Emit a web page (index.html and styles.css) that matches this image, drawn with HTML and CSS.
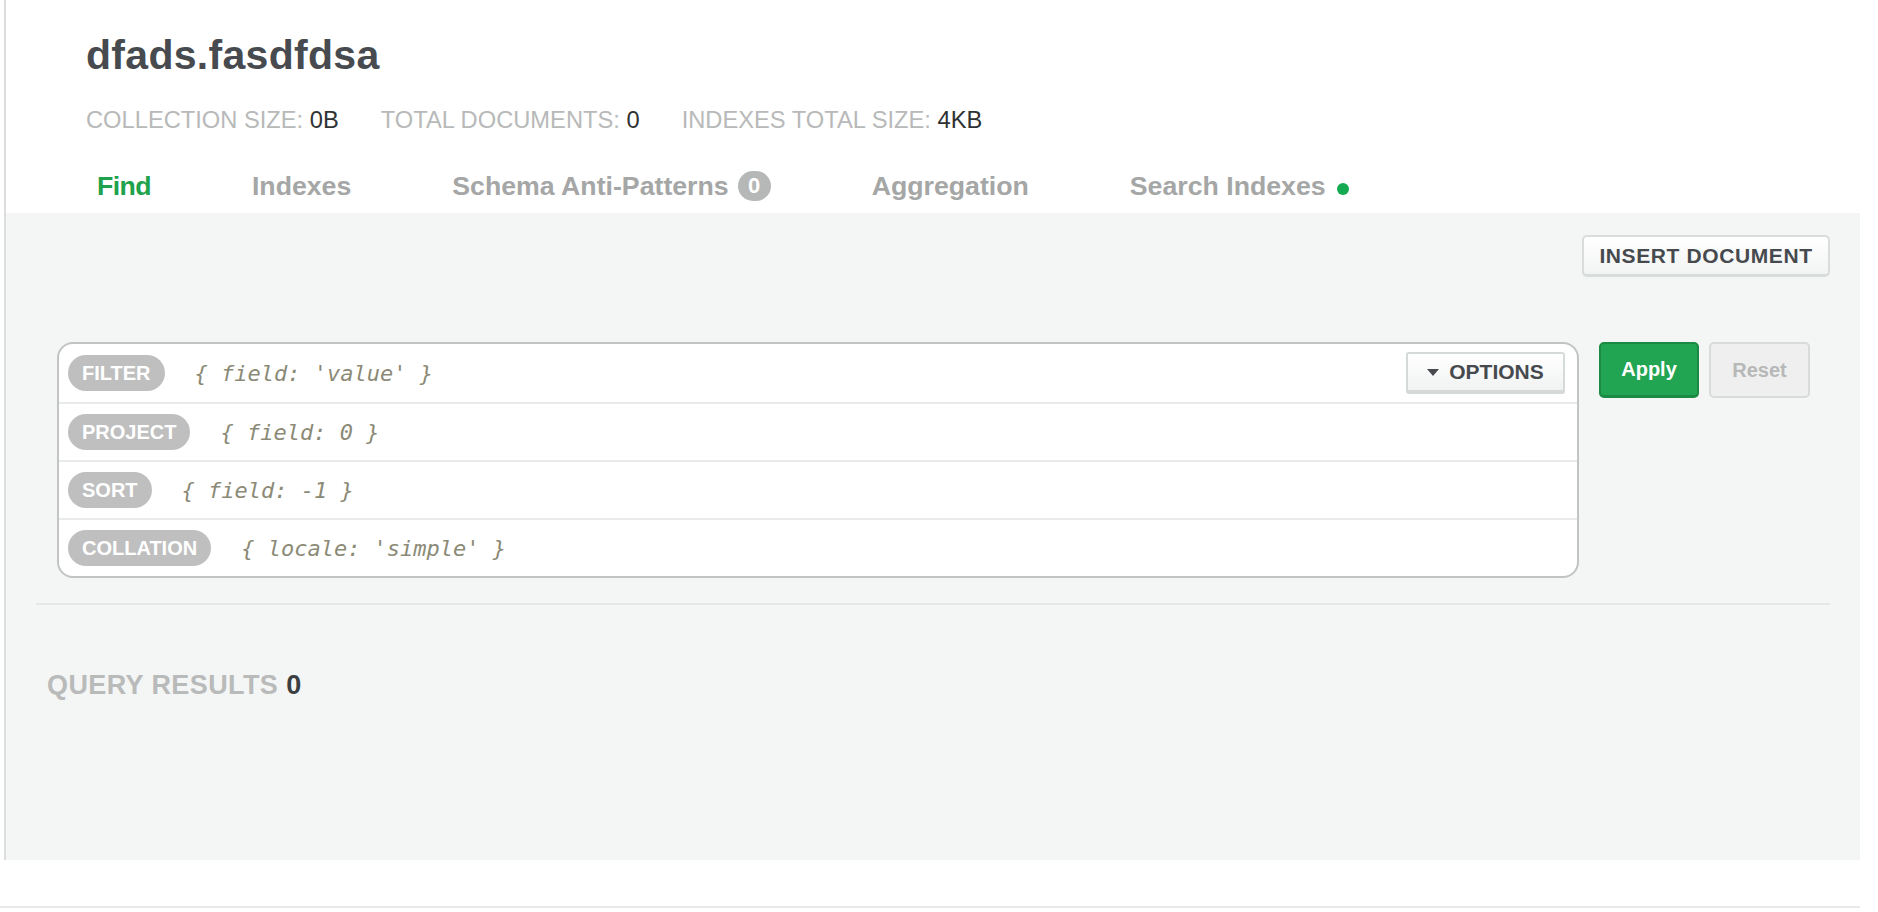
FILE: index.html
```html
<!DOCTYPE html>
<html lang="en">
<head>
<meta charset="utf-8">
<title>dfads.fasdfdsa</title>
<link rel="stylesheet" href="styles.css">
</head>
<body>
<div class="frame">
  <header class="header">
    <h1 class="title">dfads.fasdfdsa</h1>
    <div class="stats">
      <span class="stat"><span class="stat-label">COLLECTION SIZE:</span> <span class="stat-value">0B</span></span>
      <span class="stat"><span class="stat-label">TOTAL DOCUMENTS:</span> <span class="stat-value">0</span></span>
      <span class="stat"><span class="stat-label">INDEXES TOTAL SIZE:</span> <span class="stat-value">4KB</span></span>
    </div>
    <nav class="tabs">
      <span class="tab tab-active">Find</span>
      <span class="tab">Indexes</span>
      <span class="tab">Schema Anti-Patterns <span class="badge">0</span></span>
      <span class="tab">Aggregation</span>
      <span class="tab">Search Indexes <span class="dot"></span></span>
    </nav>
  </header>
  <main class="main">
    <div class="toolbar">
      <button class="btn btn-insert">INSERT DOCUMENT</button>
    </div>
    <section class="query-section">
      <div class="query-bar">
        <div class="query-row">
          <span class="pill">FILTER</span>
          <span class="code">{ field: 'value' }</span>
          <button class="btn btn-options"><span class="caret"></span>OPTIONS</button>
        </div>
        <div class="query-row">
          <span class="pill">PROJECT</span>
          <span class="code">{ field: 0 }</span>
        </div>
        <div class="query-row">
          <span class="pill">SORT</span>
          <span class="code">{ field: -1 }</span>
        </div>
        <div class="query-row">
          <span class="pill">COLLATION</span>
          <span class="code">{ locale: 'simple' }</span>
        </div>
      </div>
      <button class="btn btn-apply">Apply</button>
      <button class="btn btn-reset">Reset</button>
    </section>
    <div class="results">QUERY RESULTS <span class="results-count">0</span></div>
  </main>
</div>
<div class="footer"></div>
</body>
</html>
```

FILE: styles.css
```css
* {
  box-sizing: border-box;
}

html, body {
  margin: 0;
  padding: 0;
  background: #ffffff;
}

body {
  font-family: "Liberation Sans", Arial, sans-serif;
  color: #494c4f;
  width: 1878px;
  height: 912px;
  overflow: hidden;
}

.frame {
  margin-left: 4px;
  width: 1856px;
  height: 860px;
  border-left: 2px solid #dcdddd;
  display: flex;
  flex-direction: column;
}

.header {
  padding: 31px 0 12px 80px;
  background: #ffffff;
}

.title {
  margin: 0;
  font-size: 41px;
  line-height: 48px;
  font-weight: bold;
  color: #474b4f;
  letter-spacing: 0.3px;
}

.stats {
  margin-top: 27px;
  display: flex;
  gap: 42px;
  font-size: 23.7px;
  line-height: 28px;
}

.stat-label {
  color: #b8b9b9;
}

.stat-value {
  color: #2f3233;
}

.tabs {
  margin-top: 37px;
  margin-left: 11px;
  height: 30px;
  display: flex;
  align-items: center;
  gap: 101px;
  font-size: 26.7px;
  line-height: 30px;
  font-weight: bold;
}

.tab {
  color: #a5a6a6;
  display: flex;
  align-items: center;
  gap: 9px;
  white-space: nowrap;
}

.tab-active {
  color: #1ea24b;
  letter-spacing: -0.6px;
}

.badge {
  display: inline-flex;
  align-items: center;
  justify-content: center;
  width: 33px;
  height: 30px;
  border-radius: 15px;
  background: #b6b7b7;
  color: #ffffff;
  font-size: 22px;
}

.dot {
  display: inline-block;
  width: 12px;
  height: 12px;
  border-radius: 50%;
  background: #13aa52;
  margin-left: 2px;
  margin-top: 5px;
}

.main {
  flex: 1;
  background: #f4f5f5;
  padding: 22px 30px 0 30px;
}

.toolbar {
  display: flex;
  justify-content: flex-end;
}

.btn {
  font-family: "Liberation Sans", Arial, sans-serif;
  font-weight: bold;
  cursor: pointer;
}

.btn-insert {
  width: 248px;
  height: 42px;
  font-size: 21px;
  letter-spacing: 0.6px;
  color: #464a4e;
  background: linear-gradient(#ffffff, #f2f3f3);
  border: 2px solid #d9dcdc;
  border-bottom-width: 3px;
  border-radius: 5px;
  padding: 0;
}

.query-section {
  margin-top: 65px;
  padding: 0 20px 25px 21px;
  border-bottom: 2px solid #e6e8e8;
  display: flex;
  align-items: flex-start;
}

.query-bar {
  flex: 1;
  background: #ffffff;
  border: 2px solid #c2c4c4;
  border-radius: 16px;
  margin-right: 20px;
}

.query-row {
  height: 58px;
  display: flex;
  align-items: center;
  padding: 0 12px 0 9px;
  border-top: 2px solid #e9ebeb;
}

.query-row:first-child {
  border-top: none;
}

.pill {
  height: 36px;
  padding: 0 14px;
  border-radius: 18px;
  background: #bfbfbf;
  color: #ffffff;
  font-weight: bold;
  font-size: 20px;
  display: flex;
  align-items: center;
}

.code {
  margin-left: 30px;
  font-family: "DejaVu Sans Mono", "Liberation Mono", monospace;
  font-style: italic;
  font-size: 22px;
  color: #8b8a76;
  flex: 1;
}

.btn-options {
  width: 159px;
  height: 42px;
  display: flex;
  align-items: center;
  justify-content: center;
  gap: 10px;
  font-size: 21px;
  color: #464a4e;
  background: linear-gradient(#ffffff, #f1f2f2);
  border: 2px solid #d6d9d9;
  border-bottom-width: 4px;
  border-radius: 3px;
  padding: 0;
}

.caret {
  width: 0;
  height: 0;
  border-left: 6px solid transparent;
  border-right: 6px solid transparent;
  border-top: 7px solid #464a4e;
}

.btn-apply {
  width: 100px;
  height: 56px;
  font-size: 20px;
  color: #ffffff;
  background: #21a552;
  border: 2px solid #1b8a42;
  border-bottom-width: 3px;
  border-radius: 5px;
  margin-right: 10px;
  padding: 0;
}

.btn-reset {
  width: 101px;
  height: 56px;
  font-size: 20px;
  color: #b7b8b8;
  background: #efefef;
  border: 2px solid #d9dada;
  border-radius: 5px;
  padding: 0;
}

.results {
  margin-top: 64px;
  margin-left: 11px;
  font-size: 27px;
  line-height: 32px;
  font-weight: bold;
  letter-spacing: 0.4px;
  color: #b9baba;
}

.results-count {
  color: #3b3f41;
}

.footer {
  width: 1860px;
  height: 48px;
  border-bottom: 2px solid #e8eaea;
}
```
